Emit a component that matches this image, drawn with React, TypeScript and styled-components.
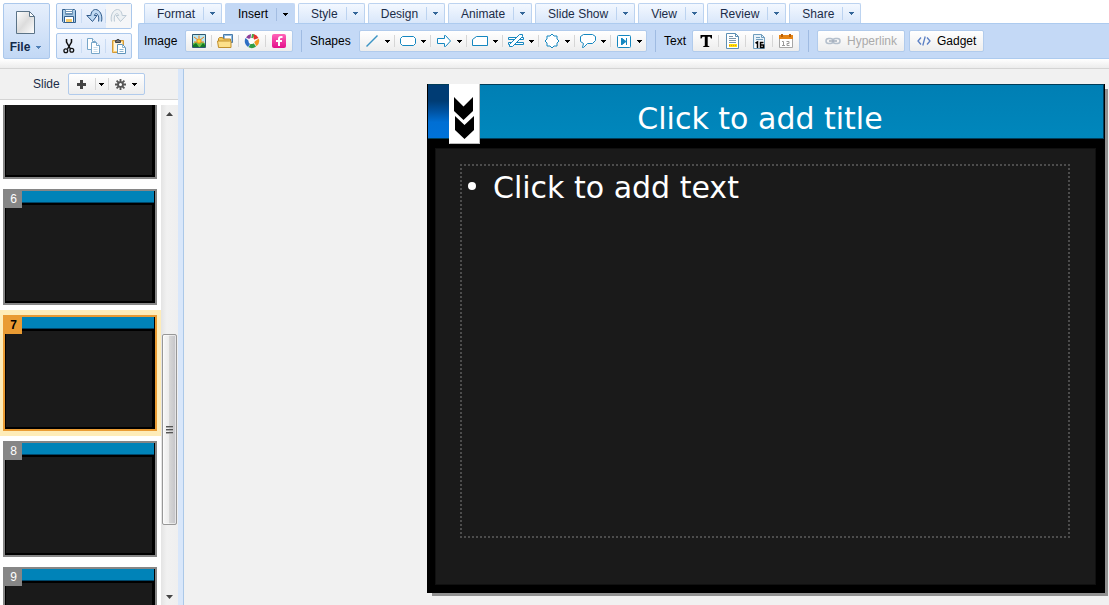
import React from 'react';
import styled, { createGlobalStyle, css } from 'styled-components';

const GlobalStyle = createGlobalStyle`
  *, *::before, *::after { box-sizing: border-box; }
  body {
    margin: 0;
    background: #f1f1f1;
    color: #000;
    font: 12px/16px "Liberation Sans", Arial, sans-serif;
  }
  button { font: inherit; color: inherit; margin: 0; padding: 0; border: 0; background: none; }
  ul, ol, h1 { margin: 0; padding: 0; list-style: none; font-weight: normal; }
  svg { display: block; flex: none; }
`;

const Page = styled.div`
  display: flex;
  flex-direction: column;
  height: 100vh;
  overflow: hidden;
`;

/* ---------- header ---------- */

const Header = styled.header`
  display: flex;
  flex: none;
  padding: 3px 0 9px 3px;
  border-bottom: 1px solid #d4d4d4;
  background: linear-gradient(#fff, #ececec) bottom / 100% 9px no-repeat #fff;
`;

const FileButton = styled.button`
  display: flex;
  flex-direction: column;
  align-items: center;
  justify-content: space-between;
  width: 47px;
  height: 56px;
  padding: 7px 2px 3px 0;
  margin-right: 6px;
  border: 1px solid #abc8ec;
  border-radius: 2px;
  background: linear-gradient(#e6effc, #c2d8f5);
  color: #132a4c;
  font-weight: bold;
`;

const FileLabel = styled.span`
  display: flex;
  align-items: center;
  gap: 6px;
  svg { color: #4f7fb5; }
`;

const QuickTools = styled.div`
  display: flex;
  flex-direction: column;
  justify-content: space-between;
  margin-right: 6px;
`;

const QuickGroup = styled.div`
  display: flex;
  width: 76px;
  height: 26px;
  border: 1px solid #abc8ec;
  border-radius: 2px;
  background: linear-gradient(#eff5fe, #dde9fa);
`;

const QuickButton = styled.button<{ $off?: boolean }>`
  display: flex;
  flex: 1;
  align-items: center;
  justify-content: center;
  background: ${p => (p.$off ? '#f5f6f8' : 'linear-gradient(#c9dbf3, #c9dbf3) right / 1px 14px no-repeat')};
  &:last-child { background-size: 0; }
  &:last-child:disabled { background-size: auto; }
`;

const Ribbon = styled.div`
  display: flex;
  flex: 1;
  flex-direction: column;
  min-width: 0;
`;

const Tabs = styled.nav`
  display: flex;
  gap: 3px;
  height: 20px;
  padding-left: 6px;
`;

const Tab = styled.div<{ $active?: boolean }>`
  display: flex;
  align-items: center;
  height: ${p => (p.$active ? '21px' : '20px')};
  border: 1px solid ${p => (p.$active ? '#c3d8f5' : '#bcd3f0')};
  border-bottom: 0;
  border-radius: 2px 2px 0 0;
  background: ${p => (p.$active ? '#c3d8f5' : 'linear-gradient(#f3f8ff, #d9e7fa)')};
  color: ${p => (p.$active ? '#000' : '#1b2c48')};
  z-index: 1;
`;

const TabName = styled.button`
  padding: 0 8px 0 12px;
  white-space: nowrap;
`;

const TabMenu = styled.button<{ $active?: boolean }>`
  display: flex;
  align-items: center;
  justify-content: center;
  width: 18px;
  height: 13px;
  border-left: 1px solid ${p => (p.$active ? '#a3bde2' : '#bcd3f0')};
  color: ${p => (p.$active ? '#000' : '#336699')};
`;

const Toolbar = styled.div`
  display: flex;
  align-items: center;
  height: 36px;
  padding-left: 5px;
  border: 1px solid #adcbef;
  border-right: 0;
  border-radius: 2px 0 0 0;
  background: #c4d9f6;
  white-space: nowrap;
`;

const GroupLabel = styled.span<{ $w: number }>`
  width: ${p => p.$w}px;
`;

const box = css`
  height: 22px;
  border: 1px solid #b1cbec;
  border-radius: 2px;
  background: linear-gradient(#fff, #ededed);
`;

const Group = styled.div`
  display: flex;
  align-items: center;
  ${box}
`;

const IconButton = styled.button<{ $wide?: boolean }>`
  display: flex;
  align-items: center;
  justify-content: center;
  gap: 5px;
  width: ${p => (p.$wide ? '36px' : '27px')};
  height: 12px;
  border-right: 1px solid #d6d6d6;
  &:first-child { width: ${p => (p.$wide ? '35px' : '26px')}; }
  &:last-child { width: ${p => (p.$wide ? '35px' : '26px')}; border-right: 0; }
`;

const Divider = styled.span`
  width: 1px;
  height: 22px;
  margin: 0 8px;
  background: #9fbbe2;
`;

const TextButton = styled.button`
  display: flex;
  align-items: center;
  gap: 6px;
  padding: 0 7px;
  margin-right: 4px;
  ${box}
  &:disabled { color: #aaa; }
`;

/* ---------- body ---------- */

const Body = styled.div`
  display: flex;
  flex: 1;
  min-height: 0;
`;

const Sidebar = styled.aside`
  display: flex;
  flex: none;
  flex-direction: column;
  width: 184px;
  border-right: 1px solid #abc8e8;
  box-shadow: inset -5px 0 0 #d9e7fa;
  padding-right: 5px;
`;

const SlideBar = styled.div`
  display: flex;
  flex: none;
  align-items: center;
  gap: 8px;
  height: 31px;
  padding-left: 33px;
  border-bottom: 1px solid #d4d4d4;
  color: #1b2c48;
`;

const BarButton = styled.button<{ $w: number }>`
  display: flex;
  align-items: center;
  justify-content: center;
  gap: 6px;
  width: ${p => p.$w}px;
  height: 12px;
  border-right: 1px solid #d6d6d6;
  color: #000;
  &:last-child { border-right: 0; }
`;

const ListArea = styled.div`
  display: flex;
  flex: 1;
  min-height: 0;
  padding-top: 5px;
  background: #fff;
`;

const SlideList = styled.ol`
  flex: 1;
  overflow: hidden;
`;

const SlideItem = styled.li<{ $active?: boolean }>`
  display: flex;
  padding: 5px 4px 5px 3px;
  background: ${p => (p.$active ? '#feecb8' : '#fff')};
  &:first-child { margin-top: -47px; }
`;

const Thumb = styled.button<{ $active?: boolean }>`
  display: flex;
  flex: 1;
  flex-direction: column;
  height: 116px;
  border: 2px solid ${p => (p.$active ? '#e99b33' : '#868686')};
  background: #000;
`;

const ThumbHead = styled.span`
  display: flex;
  width: calc(100% - 1px);
  height: 12px;
  border-bottom: 1px solid #00476a;
  background: #0083b8;
`;

const ThumbNumber = styled.span<{ $active?: boolean }>`
  z-index: 1;
  width: 17px;
  height: 17px;
  background: ${p => (p.$active ? '#e99b33' : '#868686')};
  color: ${p => (p.$active ? '#000' : '#fff')};
  font-weight: ${p => (p.$active ? 'bold' : 'normal')};
  text-align: center;
`;

const ThumbBody = styled.span`
  flex: 1;
  align-self: stretch;
  margin: 2px 3px 2px 1px;
  background: #1a1a1a;
`;

const ScrollTrack = styled.div`
  display: flex;
  flex-direction: column;
  align-items: flex-start;
  width: 17px;
  padding-left: 1px;
  background: linear-gradient(90deg, #e4e4e4, #f1f1f1 6px, #efefef);
`;

const ScrollArrow = styled.button`
  display: flex;
  align-items: center;
  justify-content: center;
  width: 15px;
  height: 17px;
`;

const ScrollSpace = styled.div<{ $grow: number }>`
  flex: ${p => p.$grow} 1 0;
`;

const ScrollThumb = styled.div`
  display: flex;
  flex: 190 1 0;
  align-items: center;
  justify-content: center;
  width: 15px;
  border: 1px solid #979797;
  border-radius: 2px;
  background: linear-gradient(90deg, #f7f7f7, #ececec 45%, #d6d6d6 50%, #c4c4c8);
  box-shadow: inset 0 0 0 1px #ffffff88;
`;

const Stage = styled.main`
  flex: 1;
  min-width: 0;
  padding: 15px 4px 12px 243px;
`;

const Slide = styled.article`
  display: flex;
  flex-direction: column;
  aspect-ratio: 678 / 509;
  background: #000;
  box-shadow: 4px 4px 0 -1px #919191;
  color: #fff;
  font-family: "DejaVu Sans", Verdana, sans-serif;
  font-size: 30px;
  line-height: 36px;
  position: relative;
`;

const SlideHead = styled.div`
  display: flex;
  flex: none;
  height: 55px;
  margin: 0 1px;
  border: 1px solid #003c58;
  border-left: 0;
  background: linear-gradient(#007fb4, #0087bc);
`;

const Accent = styled.span`
  width: 21px;
  background: linear-gradient(#003c74 30%, #0053a2 50%, #006fd4 70%, #0073da);
`;

const Bookmark = styled.span`
  position: absolute;
  top: 0;
  left: 22px;
  display: flex;
  justify-content: center;
  width: 31px;
  height: 60px;
  padding-top: 12px;
  border: 1px solid #bbb;
  border-top: 0;
  border-left-color: #fff;
  background: #fff;
`;

const SlideTitle = styled.h1`
  flex: 1;
  padding-top: 16px;
  margin-right: 32px;
  font-size: 30px;
  line-height: 36px;
  text-align: center;
`;

const SlidePanel = styled.div`
  flex: 1;
  display: flex;
  margin: 9px 9px 8px 8px;
  padding: 15px 25px 46px 24px;
  border: 1px solid #101010;
  background: #1a1a1a;
`;

const Placeholder = styled.ul`
  flex: 1;
  padding: 4px 6px;
  border: 2px dotted #4c4c4c;
`;

const Bullet = styled.li`
  display: flex;
  align-items: center;
  gap: 17px;
  &::before {
    content: "";
    width: 8px;
    height: 8px;
    margin-bottom: 4px;
    border-radius: 50%;
    background: #fff;
  }
`;

/* ---------- icons ---------- */

const Caret = () => (
  <svg width="5" height="3" viewBox="0 0 5 3" shapeRendering="crispEdges" fill="currentColor">
    <path d="M0 0h5v1H0zM1 1h3v1H1zM2 2h1v1H2z" />
  </svg>
);

const Icon = ({ children, w = 16, h = 16 }: { children: React.ReactNode; w?: number; h?: number }) => (
  <svg width={w} height={h} viewBox={`0 0 ${w} ${h}`} fill="none">{children}</svg>
);

const PageIcon = () => (
  <Icon w={20} h={23}>
    <defs>
      <linearGradient id="page" x1="0" y1="0" x2="1" y2="1">
        <stop offset="0" stopColor="#fff" /><stop offset=".5" stopColor="#dcdcdc" /><stop offset="1" stopColor="#fff" />
      </linearGradient>
    </defs>
    <path d="M.5.5h13l5 5v17H.5z" fill="url(#page)" stroke="#5b7387" />
    <path d="M13.500.5v5h5z" fill="#fff" stroke="#5b7387" />
  </Icon>
);

const SaveIcon = () => (
  <Icon>
    <path d="M1.500 1.500h12l1 1v12h-12l-1-1z" fill="#a9cbe6" stroke="#33608f" />
    <path d="M4.500 1.500h7v5h-7z" fill="#fff" stroke="#6d93b5" /><path d="M5 3.500h6M5 5.500h6" stroke="#6d93b5" />
    <path d="M3.500 8.500h9v6h-9z" fill="#fff" stroke="#33608f" />
    <path d="M5 11h6v3H5z" fill="#f7cb6a" /><path d="M5 10.500h6" stroke="#fff" />
  </Icon>
);

const undoPath = 'M15.500 13.500C17 7 13.500 1.500 9.500 1.500C7 1.500 5.200 3.800 4.800 7.500H.8L6.500 13.500L11 7.500H8.300C8.800 5.500 10.200 5.200 11.300 6.200C12.800 7.600 13 10 12.500 13.500';

const UndoIcon = () => (
  <Icon w={17}>
    <path d={undoPath} fill="#bfd9f2" stroke="#2f5a8a" />
  </Icon>
);

const RedoIcon = () => (
  <Icon w={17}>
    <path d={undoPath} fill="#edf1f4" stroke="#bccad5" transform="translate(17 0) scale(-1 1)" />
  </Icon>
);

const CutIcon = () => (
  <Icon>
    <path d="M5.500 1v3l4 7M10.500 1v3l-4 7" stroke="#111" strokeWidth="1.500" />
    <circle cx="4.800" cy="12.800" r="1.900" stroke="#111" strokeWidth="1.300" /><circle cx="10.800" cy="12.200" r="1.900" stroke="#111" strokeWidth="1.300" />
  </Icon>
);

const CopyIcon = () => (
  <Icon>
    <g fill="#fff" stroke="#77a6c9">
      <path d="M1.500.5h5l3 3v8h-8z" /><path d="M6.500.5v3h3" />
      <path d="M5.500 4.500h5l3 3v8h-8z" /><path d="M10.500 4.500v3h3" />
    </g>
    <path d="M7.500 9.500h4M7.500 11.500h4M7.500 13.500h4" stroke="#c9deec" />
  </Icon>
);

const PasteIcon = () => (
  <Icon>
    <path d="M1.500 2.500h11v12h-11z" fill="#fbd27a" stroke="#d39a3a" />
    <path d="M3 4h8v9H3z" fill="#fff6e2" />
    <path d="M4.500 2.500h1.500v-1h2v1h1.500v2h-5z" fill="#777" stroke="#444" />
    <path d="M6.500 6.500h5l3 3v6h-8z" fill="#fff" stroke="#5f94bb" /><path d="M11.500 6.500v3h3M8.500 11.500h4M8.500 13.500h4" stroke="#8ab3d0" />
  </Icon>
);

const PictureIcon = () => (
  <Icon h={14}>
    <path d="M1.500.5h13v13h-13z" fill="#b9e6f0" stroke="#2f5871" />
    <path d="M2 9l3-1h6l3 1v4H2z" fill="#6cc24a" />
    <path d="M2 13v-2l3-2 3 4zM9 13l3-4 2 2v2z" fill="#147a26" />
    <path d="M3 3l4 3M13 3L9 6M8 1.500V4M3 8h2.500M10.500 8H13" stroke="#ef7d1c" />
    <circle cx="8" cy="7" r="2.200" fill="#ffd92e" stroke="#f08c1e" />
  </Icon>
);

const FolderIcon = () => (
  <Icon w={17}>
    <path d="M6.500 1.500h9v8h-9z" fill="#8fbbe3" stroke="#4a7ba8" /><path d="M8 3h6v4H8z" fill="#fff" />
    <path d="M1.500 13.500v-8l1-1h3l1 1.500h7v7.500z" fill="#f2c75c" stroke="#b8862b" />
    <path d="M1.500 14.500l-1-6.500h12l1.500 0v6.500z" fill="#fde08a" stroke="#c1902e" />
  </Icon>
);

const PicasaIcon = () => (
  <Icon>
    <path d="M7 1a7 7 0 0 0-5 3.500l4.500 2z" fill="#8b3e9b" />
    <path d="M8 1a7 7 0 0 1 6.500 4L9.500 7V4z" fill="#e3342c" />
    <path d="M8 1l2 .3-1 4-2 .7z" fill="#3fae49" />
    <path d="M14.800 5.500a7 7 0 0 1-2.300 7.700L10 9z" fill="#f39a22" />
    <path d="M12 13.500a7 7 0 0 1-7.500.8L6.500 11l3-1z" fill="#2f9d45" />
    <path d="M4 14A7 7 0 0 1 1.500 5l3.500 3 1 3z" fill="#2f6fc4" />
    <circle cx="7.500" cy="8" r="3" fill="#fff" />
  </Icon>
);

const FotoIcon = () => (
  <Icon>
    <defs><linearGradient id="pink" x2="0" y2="1"><stop stopColor="#ff64b8" /><stop offset="1" stopColor="#e3108a" /></linearGradient></defs>
    <rect x="1" y="1" width="14" height="14" rx="2" fill="url(#pink)" />
    <path d="M11.500 4H10Q8 4 8 6v7M5 8h6" stroke="#fff" strokeWidth="2" />
  </Icon>
);

const blue = '#1587c0';
const shapes: Record<string, React.ReactNode> = {
  Line: <path d="M2.500 13.500l11-11" stroke="#3b94c4" strokeWidth="1.400" />,
  Rectangle: <path d="M2.500 3.500h11l2 2v5l-2 2h-11l-2-2v-5z" fill="#fff" stroke={blue} />,
  Arrow: <path d="M1.500 5.500h7v-3h1l5 5.500-5 5.500h-1v-3h-7z" fill="#fff" stroke={blue} />,
  Flowchart: <path d="M.5 12.500v-6l4-3h11v9z" fill="#fff" stroke={blue} />,
  Equation: <g stroke={blue}><path d="M.5 4.500h15v2H.5zM.5 9.500h15v2H.5z" fill="#fff" /><path d="M1.500 13.500v-2l10-10h3v2l-10 10z" fill="#fff" /></g>,
  Star: <path d="M8 1l2 2h3v3l2 2-2 2v3h-3l-2 2-2-2H3v-3L1 8l2-2V3h3z" fill="#fff" stroke={blue} />,
  Callout: <path d="M3.500 1.500h9l3 2v4l-3 3h-5l-4 4h-1l1-4-3-2v-5z" fill="#fff" stroke={blue} />,
  Action: <g stroke={blue}><rect x="1.500" y="2.500" width="13" height="12" rx="1" fill="#fff" /><path d="M6 5.500v6l4-3z" fill={blue} /><path d="M10.500 5v7M5.500 5v7" /></g>,
};

const TIcon = () => (
  <Icon w={14}>
    <path d="M1.500 2h11.500v3.500h-1l-1-1.700H8.700v8.900l1.600.5v.8H4.200v-.8l1.600-.5V3.800H3.500l-1 1.700h-1z" fill="#000" />
  </Icon>
);

const FooterIcon = () => (
  <Icon>
    <path d="M2.500.5h9l3 3v12h-12z" fill="#fff" stroke="#5c8fb4" /><path d="M11.500.5v3h3" stroke="#5c8fb4" />
    <path d="M5 3.500h4M5 5.500h7M5 7.500h7M5 9.500h7" stroke="#7a95ab" />
    <path d="M5 11h8v3H5z" fill="#ffe600" /><path d="M5 12.500h8" stroke="#e0803a" strokeDasharray="1 1" />
  </Icon>
);

const NumberIcon = () => (
  <Icon>
    <path d="M2.500 1.500h8l3 3v11h-11z" fill="#e8f2f9" stroke="#6f9dbd" /><path d="M10.500 1.500v3h3M5 4.500h4M5 6.500h7" stroke="#6f9dbd" />
    <path d="M4 8h9v7H4z" fill="#fff" />
    <path d="M4.500 10l2-1v6M12.500 9.500h-3v5h3v-2.500h-3" stroke="#000" strokeWidth="1.500" />
  </Icon>
);

const CalendarIcon = () => (
  <Icon>
    <path d="M1.500 4.500h13v10h-13z" fill="#fff" stroke="#a6a6a6" />
    <path d="M1 2h14v4H1z" fill="#e58415" /><path d="M3 1h2v3H3zM11 1h2v3h-2z" fill="#b85f06" />
    <path d="M4 8.500h1.500V12M4 12.500h3M8.500 8.500H11v2H9v2h2.500" stroke="#999" />
  </Icon>
);

const LinkIcon = () => (
  <Icon h={8}>
    <g stroke="#b4bfcc" strokeWidth="1.500"><rect x="1" y="1.500" width="7" height="5" rx="2.500" /><rect x="8" y="1.500" width="7" height="5" rx="2.500" /></g>
    <path d="M4 4h8" stroke="#a3aebb" strokeWidth="1.500" />
  </Icon>
);

const CodeIcon = () => (
  <Icon w={14} h={12}>
    <path d="M4 2.500L1 6l3 3.500M10 2.500L13 6l-3 3.500M8.200 1.500L5.800 10.500" stroke="#5a7fc4" strokeWidth="1.300" />
  </Icon>
);

const PlusIcon = () => (
  <Icon w={9} h={9}><path d="M3 0h3v3h3v3H6v3H3V6H0V3h3z" fill="#444" /></Icon>
);

const GearIcon = () => (
  <Icon w={11} h={11}>
    <path d="M5.500 0v11M0 5.500h11M1.600 1.600l7.800 7.800M9.400 1.600L1.600 9.400" stroke="#555" strokeWidth="1.800" />
    <circle cx="5.500" cy="5.500" r="3.300" fill="#555" /><circle cx="5.500" cy="5.500" r="1.500" fill="#fff" />
  </Icon>
);

const Chevrons = () => (
  <Icon w={21} h={44}>
    <path d="M0 1l9.500 9.500L19 1v14l-9.500 9L0 15z" fill="#000" />
    <path d="M1 20l9.500 9 9.500-9v14l-9.500 9L1 34z" fill="#000" />
  </Icon>
);

const ArrowUp = () => <Icon w={7} h={4}><path d="M3.500 0L7 4H0z" fill="#444" /></Icon>;
const ArrowDown = () => <Icon w={7} h={4}><path d="M0 0h7L3.500 4z" fill="#444" /></Icon>;
const Grip = () => (
  <Icon w={7} h={8}>
    <path d="M0 .5h7M0 3.500h7M0 6.500h7" stroke="#555" />
    <path d="M0 1.500h7M0 4.500h7M0 7.500h7" stroke="#aaa" />
  </Icon>
);

/* ---------- page ---------- */

const tabs = ['Format', 'Insert', 'Style', 'Design', 'Animate', 'Slide Show', 'View', 'Review', 'Share'];

const slides = [5, 6, 7, 8, 9];

export default function App() {
  const activeTab = 'Insert';
  const activeSlide = 7;
  return (
    <Page>
      <GlobalStyle />
      <Header>
        <FileButton>
          <PageIcon />
          <FileLabel>File <Caret /></FileLabel>
        </FileButton>
        <QuickTools>
          <QuickGroup>
            <QuickButton aria-label="Save"><SaveIcon /></QuickButton>
            <QuickButton aria-label="Undo"><UndoIcon /></QuickButton>
            <QuickButton aria-label="Redo" $off disabled><RedoIcon /></QuickButton>
          </QuickGroup>
          <QuickGroup>
            <QuickButton aria-label="Cut"><CutIcon /></QuickButton>
            <QuickButton aria-label="Copy"><CopyIcon /></QuickButton>
            <QuickButton aria-label="Paste"><PasteIcon /></QuickButton>
          </QuickGroup>
        </QuickTools>
        <Ribbon>
          <Tabs>
            {tabs.map(t => (
              <Tab key={t} $active={t === activeTab}>
                <TabName>{t}</TabName>
                <TabMenu $active={t === activeTab} aria-label={`${t} menu`}><Caret /></TabMenu>
              </Tab>
            ))}
          </Tabs>
          <Toolbar>
            <GroupLabel $w={41}>Image</GroupLabel>
            <Group>
              <IconButton aria-label="Picture"><PictureIcon /></IconButton>
              <IconButton aria-label="Library"><FolderIcon /></IconButton>
              <IconButton aria-label="Picasa"><PicasaIcon /></IconButton>
              <IconButton aria-label="Photos"><FotoIcon /></IconButton>
            </Group>
            <Divider />
            <GroupLabel $w={49}>Shapes</GroupLabel>
            <Group>
              {Object.keys(shapes).map(name => (
                <IconButton key={name} $wide aria-label={name}>
                  <Icon>{shapes[name]}</Icon>
                  <Caret />
                </IconButton>
              ))}
            </Group>
            <Divider />
            <GroupLabel $w={28}>Text</GroupLabel>
            <Group>
              <IconButton aria-label="Text box"><TIcon /></IconButton>
              <IconButton aria-label="Footer"><FooterIcon /></IconButton>
              <IconButton aria-label="Slide number"><NumberIcon /></IconButton>
              <IconButton aria-label="Date"><CalendarIcon /></IconButton>
            </Group>
            <Divider />
            <TextButton disabled><LinkIcon />Hyperlink</TextButton>
            <TextButton><CodeIcon />Gadget</TextButton>
          </Toolbar>
        </Ribbon>
      </Header>
      <Body>
        <Sidebar>
          <SlideBar>
            Slide
            <Group>
              <BarButton $w={27} aria-label="Add slide"><PlusIcon /></BarButton>
              <BarButton $w={13} aria-label="Add slide menu"><Caret /></BarButton>
              <BarButton $w={35} aria-label="Slide options"><GearIcon /><Caret /></BarButton>
            </Group>
          </SlideBar>
          <ListArea>
            <SlideList>
              {slides.map((n, i) => {
                const on = n === activeSlide;
                return (
                  <SlideItem key={n} $active={on}>
                    <Thumb $active={on} aria-label={`Slide ${n}`}>
                      <ThumbHead>{i > 0 && <ThumbNumber $active={on}>{n}</ThumbNumber>}</ThumbHead>
                      <ThumbBody />
                    </Thumb>
                  </SlideItem>
                );
              })}
            </SlideList>
            <ScrollTrack>
              <ScrollArrow aria-label="Scroll up"><ArrowUp /></ScrollArrow>
              <ScrollSpace $grow={213} />
              <ScrollThumb><Grip /></ScrollThumb>
              <ScrollSpace $grow={63} />
              <ScrollArrow aria-label="Scroll down"><ArrowDown /></ScrollArrow>
            </ScrollTrack>
          </ListArea>
        </Sidebar>
        <Stage>
          <Slide>
            <SlideHead>
              <Accent />
              <SlideTitle>Click to add title</SlideTitle>
            </SlideHead>
            <Bookmark><Chevrons /></Bookmark>
            <SlidePanel>
              <Placeholder><Bullet>Click to add text</Bullet></Placeholder>
            </SlidePanel>
          </Slide>
        </Stage>
      </Body>
    </Page>
  );
}
